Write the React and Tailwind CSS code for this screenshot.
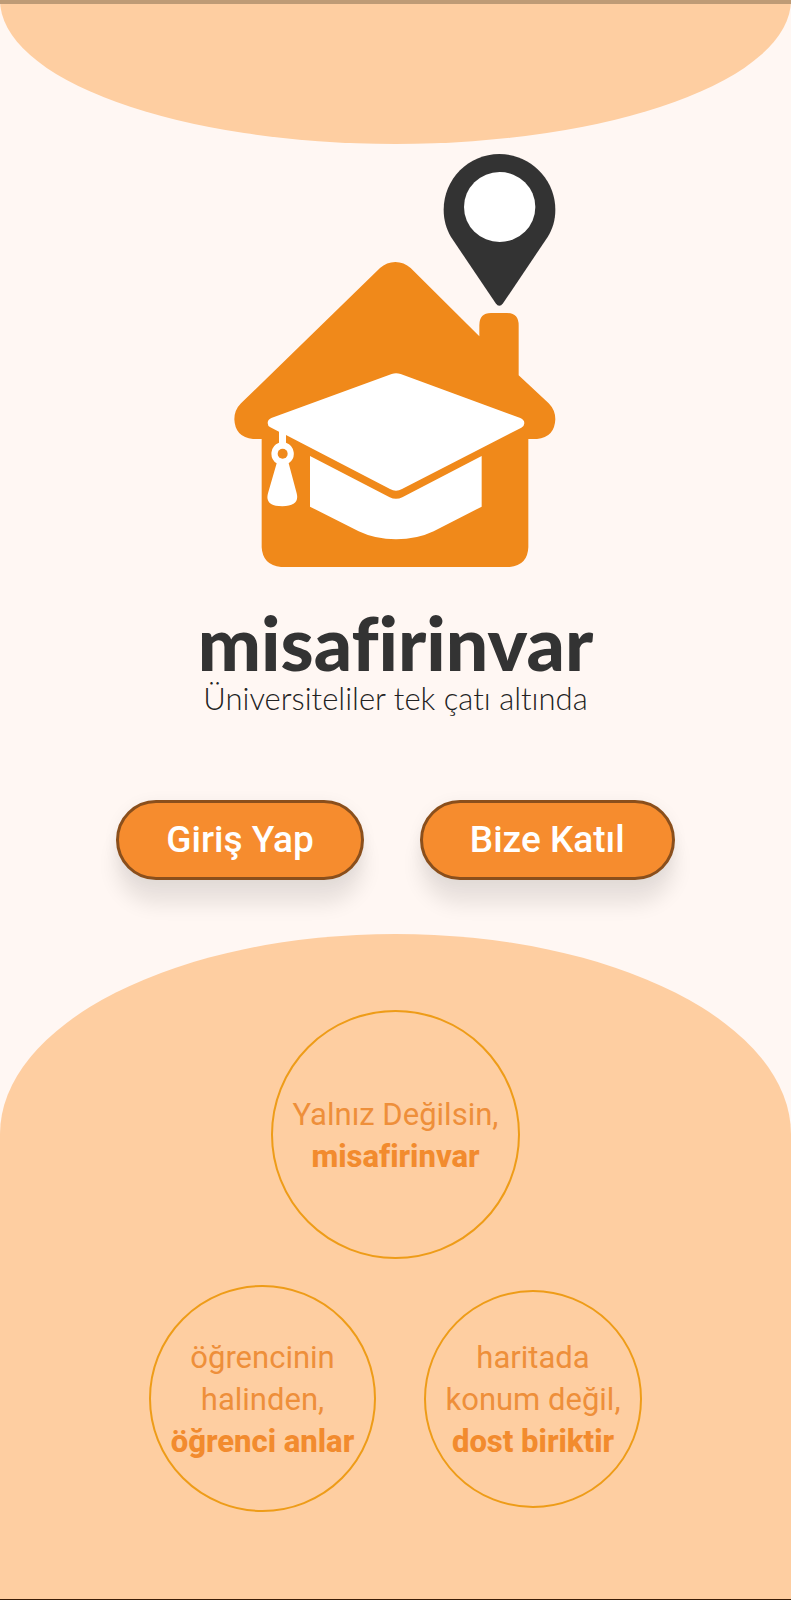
function Logo() {
  return (
    <svg className="h-[415px] w-[323px]" viewBox="41 39 969 1245" role="img" aria-label="misafirinvar">
      <path
        fill="#333333"
        d="M837 42C745 42 670 117 670 209C670 240 678 266 692 291L826 490Q837 505 848 490L982 291C997 266 1005 240 1005 209C1005 117 930 42 837 42Z"
      />
      <ellipse cx="838" cy="201" rx="107" ry="105" fill="#ffffff" />
      <path
        fill="#f0891a"
        d="M479 384Q499 366 525 366Q551 366 571 384L777 589V556Q777 519 812 519H860Q895 519 895 556V706L985 790Q1005 810 1005 838Q1003 892 950 897H924V1222Q922 1276 868 1281H182Q127 1276 124 1222V897H98Q44 892 42 838Q42 810 62 790Z"
      />
      <path
        fill="#ffffff"
        d="M514 702Q527 697 541 702L900 834Q912 839 912 850Q912 858 903 863L545 1047Q527 1058 509 1047L197 885V908A35 35 0 0 1 205 970L229 1060Q239 1098 186 1099Q132 1098 143 1060L169 970A35 35 0 0 1 176 908V875L150 862Q142 858 142 849Q142 839 153 834Z"
      />
      <circle cx="187" cy="941" r="15" fill="#f0891a" />
      <path
        fill="#ffffff"
        d="M269 948L508 1072Q527 1081 546 1072L784 948V1100L640 1174Q590 1198 527 1198Q465 1198 415 1174L269 1100Z"
      />
    </svg>
  );
}

function ActionButton({ children }) {
  return (
    <button
      type="button"
      className="h-20 rounded-full border-3 border-[#8a4f1c] bg-[#f68c2e] px-[47px] text-[37px] font-medium text-white shadow-[0_24px_20px_rgba(0,0,0,0.09),0_2px_16px_rgba(0,0,0,0.05)]"
    >
      {children}
    </button>
  );
}

function Bubble({ size, lines, strong }) {
  return (
    <p
      className={`${size} flex aspect-square shrink-0 flex-col items-center justify-center rounded-full border-2 border-[#ee9c18] pt-0.5 text-center text-[31px] leading-[42px] text-[#ee8f3a]`}
    >
      {lines.map((line) => (
        <span key={line}>{line}</span>
      ))}
      <strong className="font-extrabold text-[#f28b2e]">{strong}</strong>
    </p>
  );
}

export default function App() {
  return (
    <main className="relative flex min-h-screen flex-col bg-[#fff7f3] font-['Roboto',sans-serif] [font-variant-ligatures:none]">
      <div className="absolute inset-x-0 top-0 h-1 bg-[#be9b76]" />
      <div className="h-36 bg-[#fecea1] [border-radius:0_0_50%_50%/0_0_100%_100%]" />

      <section className="flex flex-col items-center pt-[9px]">
        <Logo />
        <h1 className="mt-[34px] font-['Lato',sans-serif] text-[75px] leading-[80px] font-black text-[#333333]">
          misafirinvar
        </h1>
        <p className="font-['Lato',sans-serif] text-[31px] leading-8 font-light text-[#222222]">
          Üniversiteliler tek çatı altında
        </p>
        <div className="mt-[86px] flex gap-14">
          <ActionButton>Giriş Yap</ActionButton>
          <ActionButton>Bize Katıl</ActionButton>
        </div>
      </section>

      <section className="mt-[54px] flex grow flex-col items-center border-b border-[#3a1c06] bg-[#fecea1] pt-[76px] pb-20 [border-radius:50%_50%_0_0/200px_200px_0_0]">
        <Bubble size="w-[249px]" lines={["Yalnız Değilsin,"]} strong="misafirinvar" />
        <div className="mt-[26px] flex items-center gap-12">
          <Bubble size="w-[227px]" lines={["öğrencinin", "halinden,"]} strong="öğrenci anlar" />
          <Bubble size="w-[218px]" lines={["haritada", "konum değil,"]} strong="dost biriktir" />
        </div>
      </section>
    </main>
  );
}
